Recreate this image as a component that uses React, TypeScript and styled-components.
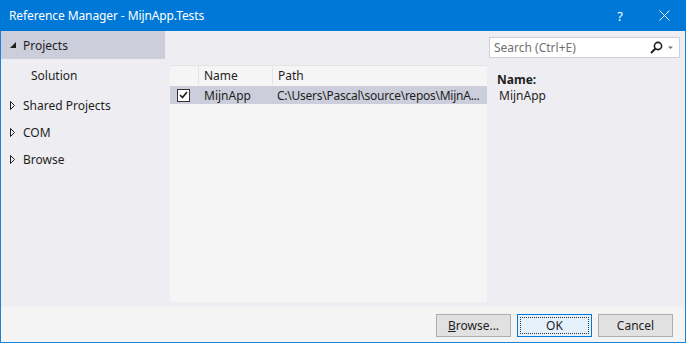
import React from 'react';
import styled, { createGlobalStyle } from 'styled-components';

const GlobalStyle = createGlobalStyle`
  html, body {
    margin: 0;
    padding: 0;
    background: #ffffff;
  }
  body {
    font-family: "Noto Sans", "Open Sans", sans-serif;
    font-size: 12px;
    color: #1e1e1e;
  }
`;

const Window = styled.div`
  width: 686px;
  height: 343px;
  box-sizing: border-box;
  display: flex;
  flex-direction: column;
  border: 1px solid #1883d7;
  border-top: none;
  background: #eeeef2;
`;

const TitleBar = styled.div`
  height: 31px;
  margin: 0 -1px;
  background: #0078d7;
  color: #ffffff;
  display: flex;
  align-items: center;
  padding-left: 9px;
  flex-shrink: 0;
`;

const Title = styled.div`
  flex: 1;
  font-size: 12px;
  letter-spacing: -0.1px;
`;

const TitleButton = styled.div`
  width: 44px;
  height: 31px;
  display: flex;
  align-items: center;
  justify-content: center;
  font-size: 13px;
`;

const Body = styled.div`
  flex: 1;
  display: flex;
  min-height: 0;
`;

const Nav = styled.div`
  width: 164px;
  display: flex;
  flex-direction: column;
`;

const NavItem = styled.div<{ $selected?: boolean; $indent?: number; $height?: number; $top?: number }>`
  height: ${p => p.$height ?? 28}px;
  margin-top: ${p => p.$top ?? 0}px;
  display: flex;
  align-items: center;
  padding-left: ${p => p.$indent ?? 9}px;
  background: ${p => (p.$selected ? '#cccedb' : 'transparent')};
`;

const Arrow = styled.span`
  width: 13px;
  display: inline-flex;
  align-items: center;
`;

const Center = styled.div`
  width: 317px;
  padding: 34px 0 5px 5px;
  display: flex;
`;

const List = styled.div`
  flex: 1;
  background: #f5f5f5;
  display: flex;
  flex-direction: column;
`;

const HeaderRow = styled.div`
  height: 19px;
  display: grid;
  grid-template-columns: 28px 74px 1fr;
  border-top: 1px solid #e3e3e8;
  border-bottom: 1px solid #f5f5f5;
`;

const HeaderCell = styled.div<{ $divider?: boolean }>`
  display: flex;
  align-items: center;
  padding-left: 5px;
  border-left: ${p => (p.$divider ? '1px solid #e3e3e8' : 'none')};
`;

const Row = styled.div<{ $selected?: boolean }>`
  height: 18px;
  display: grid;
  grid-template-columns: 28px 74px 1fr;
  background: ${p => (p.$selected ? '#cccedb' : 'transparent')};
`;

const Cell = styled.div<{ $tight?: boolean }>`
  display: flex;
  align-items: center;
  padding-left: ${p => (p.$tight ? 5 : 6)}px;
  white-space: nowrap;
  overflow: hidden;
  letter-spacing: ${p => (p.$tight ? '-0.25px' : 'normal')};
`;

const CheckBox = styled.div`
  width: 11px;
  height: 11px;
  border: 1px solid #333337;
  background: #ffffff;
  margin-left: 1px;
  display: flex;
  align-items: center;
  justify-content: center;
`;

const Side = styled.div`
  flex: 1;
  padding: 6px 5px 0 2px;
  display: flex;
  flex-direction: column;
`;

const Search = styled.div`
  height: 19px;
  border: 1px solid #cccedb;
  background: #ffffff;
  display: flex;
  align-items: center;
  padding: 0 4px 0 4px;
`;

const SearchText = styled.div`
  flex: 1;
  color: #717171;
`;

const Details = styled.div`
  padding: 14px 0 0 8px;
  line-height: 16px;
`;

const DetailLabel = styled.div`
  font-weight: bold;
`;

const DetailValue = styled.div`
  padding-left: 2px;
`;

const Footer = styled.div`
  height: 35px;
  background: #f4f4f4;
  display: flex;
  justify-content: flex-end;
  align-items: flex-start;
  padding: 7px 12px 0 0;
  box-sizing: border-box;
  gap: 6px;
  flex-shrink: 0;
`;

const Button = styled.button<{ $default?: boolean }>`
  width: 75px;
  height: 23px;
  box-sizing: border-box;
  font-family: inherit;
  font-size: 12px;
  color: #1e1e1e;
  background: ${p => (p.$default ? '#e5f1fb' : '#e1e1e1')};
  border: 1px solid ${p => (p.$default ? '#0078d7' : '#adadad')};
  padding: 0;
  display: flex;
  align-items: center;
  justify-content: center;
  position: relative;
`;

const FocusRing = styled.span`
  position: absolute;
  inset: 2px;
  border: 1px dotted #333333;
`;

const Underline = styled.span`
  text-decoration: underline;
`;

const CollapsedArrow: React.FC = () => (
  <Arrow>
    <svg width="5" height="9" viewBox="0 0 5 9">
      <path d="M0.5 0.5 L4.5 4.5 L0.5 8.5 Z" fill="none" stroke="#1e1e1e" strokeWidth="1" />
    </svg>
  </Arrow>
);

const App: React.FC = () => {
  return (
    <>
      <GlobalStyle />
      <Window>
        <TitleBar>
          <Title>Reference Manager - MijnApp.Tests</Title>
          <TitleButton>?</TitleButton>
          <TitleButton>
            <svg width="11" height="11" viewBox="0 0 11 11">
              <path d="M0.5 0.5 L10.5 10.5 M10.5 0.5 L0.5 10.5" stroke="#ffffff" strokeWidth="1" />
            </svg>
          </TitleButton>
        </TitleBar>
        <Body>
          <Nav>
            <NavItem $selected>
              <Arrow>
                <svg width="6" height="6" viewBox="0 0 6 6">
                  <path d="M6 0 L6 6 L0 6 Z" fill="#1e1e1e" />
                </svg>
              </Arrow>
              Projects
            </NavItem>
            <NavItem $indent={30} $top={2}>Solution</NavItem>
            <NavItem $top={2}>
              <CollapsedArrow />
              Shared Projects
            </NavItem>
            <NavItem $height={27}>
              <CollapsedArrow />
              COM
            </NavItem>
            <NavItem $height={27}>
              <CollapsedArrow />
              Browse
            </NavItem>
          </Nav>
          <Center>
            <List>
              <HeaderRow>
                <HeaderCell />
                <HeaderCell $divider>Name</HeaderCell>
                <HeaderCell $divider>Path</HeaderCell>
              </HeaderRow>
              <Row $selected>
                <Cell>
                  <CheckBox>
                    <svg width="9" height="8" viewBox="0 0 9 8">
                      <path d="M1 4 L3.5 6.5 L8 1" fill="none" stroke="#1e1e1e" strokeWidth="1.6" />
                    </svg>
                  </CheckBox>
                </Cell>
                <Cell>MijnApp</Cell>
                <Cell $tight>C:\Users\Pascal\source\repos\MijnA...</Cell>
              </Row>
            </List>
          </Center>
          <Side>
            <Search>
              <SearchText>Search (Ctrl+E)</SearchText>
              <svg width="13" height="13" viewBox="0 0 13 13">
                <circle cx="8" cy="5" r="3.6" fill="none" stroke="#1e1e1e" strokeWidth="1.6" />
                <path d="M5.5 7.5 L1 12" stroke="#1e1e1e" strokeWidth="2" />
              </svg>
              <svg width="9" height="9" viewBox="0 0 9 9" style={{ marginLeft: 3 }}>
                <path d="M2 3.5 L7 3.5 L4.5 6 Z" fill="#717171" />
              </svg>
            </Search>
            <Details>
              <DetailLabel>Name:</DetailLabel>
              <DetailValue>MijnApp</DetailValue>
            </Details>
          </Side>
        </Body>
        <Footer>
          <Button>
            <Underline>B</Underline>rowse...
          </Button>
          <Button $default>
            <FocusRing />
            OK
          </Button>
          <Button>Cancel</Button>
        </Footer>
      </Window>
    </>
  );
};

export default App;
